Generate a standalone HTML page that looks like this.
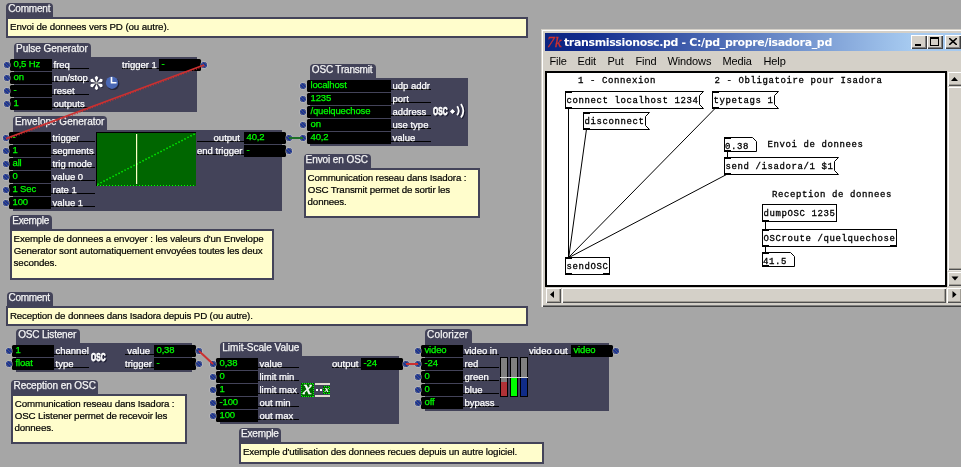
<!DOCTYPE html>
<html lang="fr"><head><meta charset="utf-8"><title>transmissionosc</title>
<style>
html,body{margin:0;padding:0;overflow:hidden}
body{width:961px;height:467px;overflow:hidden;background:#a6a6a6;position:relative;font-family:"Liberation Sans",sans-serif}
#isa div,#isa span,#isa i,#pd div,#pd span,#pd svg{position:absolute;display:block}
#isa,#pd{position:absolute;left:0;top:0;will-change:transform}
.tab{background:#434359;border-radius:4px 4px 0 0}
.pn{background:#434359}
.tt{color:#f4f4f4;-webkit-text-stroke:.25px #f4f4f4;font-size:10px;line-height:12px;white-space:nowrap;letter-spacing:0}
.cb{background:#fffdcc;border:2px solid #434359}
.ct{color:#000;-webkit-text-stroke:.2px #000;font-size:9.75px;line-height:12px;white-space:nowrap}
.fi{background:#000;height:12px;border-radius:1.5px 0 0 1.5px}
.fo{background:#000;height:12px;border-radius:0 1.5px 1.5px 0}
.gv{color:#00ff00;-webkit-text-stroke:.25px #00ff00;font-size:9.5px;line-height:11px;white-space:nowrap;letter-spacing:-.15px}
.lb{color:#fff;-webkit-text-stroke:.25px #fff;font-size:9.5px;line-height:11px;white-space:nowrap}
.pt{width:6px;height:6px;border-radius:50%;background:repeating-linear-gradient(45deg,#1a3296 0 1.5px,#485478 1.5px 2.3px);box-shadow:0 0 0 .8px rgba(200,200,205,.55)}
#pd{left:541px;top:29px;width:430px;height:278px;background:#d4d0c8;box-shadow:inset 1px 1px 0 #d4d0c8,inset 2px 2px 0 #fff,inset -1px -1px 0 #404040,inset -2px -2px 0 #808080}
.wt{color:#fff;font-weight:bold;font-size:11px;line-height:16px;white-space:nowrap;font-family:"DejaVu Sans","Liberation Sans",sans-serif}
.mn{color:#000;font-size:11px;line-height:14px;white-space:nowrap;letter-spacing:-.12px}
.cbt{width:16px;height:14px;background:#d4d0c8;box-shadow:inset 1px 1px 0 #fff,inset -1px -1px 0 #404040,inset -2px -2px 0 #808080}
.sbt{background:#d4d0c8;box-shadow:inset 1px 1px 0 #d4d0c8,inset 2px 2px 0 #fff,inset -1px -1px 0 #505050,inset -2px -2px 0 #a09c94}
svg.ov{position:absolute;left:0;top:0;pointer-events:none;will-change:transform}
</style></head>
<body>
<div id="isa">
<div class="tab" style="left:6px;top:3px;width:47px;height:14px"></div>
<span class="tt" style="left:8.2px;top:3px;letter-spacing:-0.167px;">Comment</span>
<div class="cb" style="left:6px;top:17px;width:518px;height:17px"></div>
<span class="ct" style="left:10.1px;top:21px;letter-spacing:-0.114px;">Envoi de donnees vers PD (ou autre).</span>
<div class="pn" style="left:14px;top:57px;width:183px;height:55px"></div>
<div class="tab" style="left:14px;top:43px;width:77px;height:14px"></div>
<span class="tt" style="left:16.1px;top:43px;letter-spacing:-0.071px;">Pulse Generator</span>
<div class="fi" style="left:10px;top:59px;width:42px"></div>
<span class="gv" style="left:13.5px;top:58px;">0,5 Hz</span>
<div style="left:52px;top:68px;width:37px;height:1px;background:#000;"></div>
<span class="lb" style="left:53.5px;top:59px;">freq</span>
<i class="pt" style="left:4px;top:62px"></i>
<div class="fi" style="left:10px;top:72px;width:42px"></div>
<span class="gv" style="left:13.5px;top:71px;">on</span>
<div style="left:52px;top:81px;width:37px;height:1px;background:#000;"></div>
<span class="lb" style="left:53.5px;top:72px;">run/stop</span>
<i class="pt" style="left:4px;top:75px"></i>
<div class="fi" style="left:10px;top:85px;width:42px"></div>
<span class="gv" style="left:13.5px;top:84px;">-</span>
<div style="left:52px;top:94px;width:37px;height:1px;background:#000;"></div>
<span class="lb" style="left:53.5px;top:85px;">reset</span>
<i class="pt" style="left:4px;top:88px"></i>
<div class="fi" style="left:10px;top:98px;width:42px"></div>
<span class="gv" style="left:13.5px;top:97px;">1</span>
<div style="left:52px;top:107px;width:37px;height:1px;background:#000;"></div>
<span class="lb" style="left:53.5px;top:98px;">outputs</span>
<i class="pt" style="left:4px;top:101px"></i>
<div class="fo" style="left:159px;top:59px;width:42px"></div>
<span class="gv" style="left:161.5px;top:58px;">-</span>
<div style="left:122px;top:68px;width:37px;height:1px;background:#000;"></div>
<span class="lb" style="left:122px;top:59px;width:33px;text-align:right">trigger 1</span>
<i class="pt" style="left:201px;top:62px"></i>
<div class="pn" style="left:13px;top:130px;width:269px;height:81px"></div>
<div class="tab" style="left:13px;top:116px;width:94px;height:14px"></div>
<span class="tt" style="left:14.9px;top:116px;letter-spacing:0.000px;">Envelope Generator</span>
<div class="fi" style="left:9px;top:132px;width:42px"></div>
<span class="gv" style="left:12.5px;top:131px;">-</span>
<div style="left:51px;top:141px;width:44px;height:1px;background:#000;"></div>
<span class="lb" style="left:52.5px;top:132px;">trigger</span>
<i class="pt" style="left:3px;top:135px"></i>
<div class="fi" style="left:9px;top:145px;width:42px"></div>
<span class="gv" style="left:12.5px;top:144px;">1</span>
<div style="left:51px;top:154px;width:44px;height:1px;background:#000;"></div>
<span class="lb" style="left:52.5px;top:145px;">segments</span>
<i class="pt" style="left:3px;top:148px"></i>
<div class="fi" style="left:9px;top:158px;width:42px"></div>
<span class="gv" style="left:12.5px;top:157px;">all</span>
<div style="left:51px;top:167px;width:44px;height:1px;background:#000;"></div>
<span class="lb" style="left:52.5px;top:158px;">trig mode</span>
<i class="pt" style="left:3px;top:161px"></i>
<div class="fi" style="left:9px;top:171px;width:42px"></div>
<span class="gv" style="left:12.5px;top:170px;">0</span>
<div style="left:51px;top:180px;width:44px;height:1px;background:#000;"></div>
<span class="lb" style="left:52.5px;top:171px;">value 0</span>
<i class="pt" style="left:3px;top:174px"></i>
<div class="fi" style="left:9px;top:184px;width:42px"></div>
<span class="gv" style="left:12.5px;top:183px;">1 Sec</span>
<div style="left:51px;top:193px;width:44px;height:1px;background:#000;"></div>
<span class="lb" style="left:52.5px;top:184px;">rate 1</span>
<i class="pt" style="left:3px;top:187px"></i>
<div class="fi" style="left:9px;top:197px;width:42px"></div>
<span class="gv" style="left:12.5px;top:196px;">100</span>
<div style="left:51px;top:206px;width:44px;height:1px;background:#000;"></div>
<span class="lb" style="left:52.5px;top:197px;">value 1</span>
<i class="pt" style="left:3px;top:200px"></i>
<div class="fo" style="left:244px;top:132px;width:42px"></div>
<span class="gv" style="left:246.5px;top:131px;">40,2</span>
<div style="left:197px;top:141px;width:47px;height:1px;background:#000;"></div>
<span class="lb" style="left:197px;top:132px;width:43px;text-align:right">output</span>
<i class="pt" style="left:286px;top:135px"></i>
<div class="fo" style="left:244px;top:145px;width:42px"></div>
<span class="gv" style="left:246.5px;top:144px;">-</span>
<div style="left:197px;top:154px;width:47px;height:1px;background:#000;"></div>
<span class="lb" style="left:197px;top:145px;width:43px;text-align:right">end trigger</span>
<i class="pt" style="left:286px;top:148px"></i>
<div class="pn" style="left:310px;top:78px;width:158px;height:68px"></div>
<div class="tab" style="left:310px;top:64px;width:66px;height:14px"></div>
<span class="tt" style="left:311.8px;top:64px;letter-spacing:-0.182px;">OSC Transmit</span>
<div class="fi" style="left:307px;top:80px;width:84px"></div>
<span class="gv" style="left:310.5px;top:79px;">localhost</span>
<div style="left:391px;top:89px;width:40px;height:1px;background:#000;"></div>
<span class="lb" style="left:392.5px;top:80px;">udp addr</span>
<i class="pt" style="left:300px;top:83px"></i>
<div class="fi" style="left:307px;top:93px;width:84px"></div>
<span class="gv" style="left:310.5px;top:92px;">1235</span>
<div style="left:391px;top:102px;width:40px;height:1px;background:#000;"></div>
<span class="lb" style="left:392.5px;top:93px;">port</span>
<i class="pt" style="left:300px;top:96px"></i>
<div class="fi" style="left:307px;top:106px;width:84px"></div>
<span class="gv" style="left:310.5px;top:105px;">/quelquechose</span>
<div style="left:391px;top:115px;width:40px;height:1px;background:#000;"></div>
<span class="lb" style="left:392.5px;top:106px;">address</span>
<i class="pt" style="left:300px;top:109px"></i>
<div class="fi" style="left:307px;top:119px;width:84px"></div>
<span class="gv" style="left:310.5px;top:118px;">on</span>
<div style="left:391px;top:128px;width:40px;height:1px;background:#000;"></div>
<span class="lb" style="left:392.5px;top:119px;">use type</span>
<i class="pt" style="left:300px;top:122px"></i>
<div class="fi" style="left:307px;top:132px;width:84px"></div>
<span class="gv" style="left:310.5px;top:131px;">40,2</span>
<div style="left:391px;top:141px;width:40px;height:1px;background:#000;"></div>
<span class="lb" style="left:392.5px;top:132px;">value</span>
<i class="pt" style="left:300px;top:135px"></i>
<div class="tab" style="left:10px;top:215px;width:42px;height:14px"></div>
<span class="tt" style="left:12.3px;top:215px;letter-spacing:-0.333px;">Exemple</span>
<div class="cb" style="left:10px;top:229px;width:260px;height:47px"></div>
<span class="ct" style="left:13.6px;top:233px;letter-spacing:-0.109px;">Exemple de donnees a envoyer : les valeurs d'un Envelope</span>
<span class="ct" style="left:13.8px;top:245px;letter-spacing:-0.130px;">Generator sont automatiquement envoyées toutes les deux</span>
<span class="ct" style="left:13.6px;top:257px;letter-spacing:-0.125px;">secondes.</span>
<div class="tab" style="left:304px;top:154px;width:67px;height:14px"></div>
<span class="tt" style="left:305.6px;top:154px;letter-spacing:-0.091px;">Envoi en OSC</span>
<div class="cb" style="left:304px;top:168px;width:172px;height:46px"></div>
<span class="ct" style="left:307.6px;top:172px;letter-spacing:-0.176px;">Communication reseau dans Isadora :</span>
<span class="ct" style="left:307.8px;top:184px;letter-spacing:-0.156px;">OSC Transmit permet de sortir les</span>
<span class="ct" style="left:307.6px;top:196px;letter-spacing:-0.143px;">donnees.</span>
<div class="tab" style="left:7px;top:292px;width:46px;height:14px"></div>
<span class="tt" style="left:8.6px;top:292px;letter-spacing:-0.333px;">Comment</span>
<div class="cb" style="left:6px;top:306px;width:518px;height:16px"></div>
<span class="ct" style="left:9.9px;top:310px;letter-spacing:-0.167px;">Reception de donnees dans Isadora depuis PD (ou autre).</span>
<div class="pn" style="left:16px;top:343px;width:176px;height:29px"></div>
<div class="tab" style="left:16px;top:329px;width:64px;height:14px"></div>
<span class="tt" style="left:18.2px;top:329px;letter-spacing:-0.182px;">OSC Listener</span>
<div class="fi" style="left:12px;top:345px;width:42px"></div>
<span class="gv" style="left:15.5px;top:344px;">1</span>
<div style="left:54px;top:354px;width:35px;height:1px;background:#000;"></div>
<span class="lb" style="left:55.5px;top:345px;">channel</span>
<i class="pt" style="left:6px;top:348px"></i>
<div class="fi" style="left:12px;top:358px;width:42px"></div>
<span class="gv" style="left:15.5px;top:357px;">float</span>
<div style="left:54px;top:367px;width:35px;height:1px;background:#000;"></div>
<span class="lb" style="left:55.5px;top:358px;">type</span>
<i class="pt" style="left:6px;top:361px"></i>
<div class="fo" style="left:154px;top:345px;width:42px"></div>
<span class="gv" style="left:156.5px;top:344px;">0,38</span>
<div style="left:125px;top:354px;width:29px;height:1px;background:#000;"></div>
<span class="lb" style="left:125px;top:345px;width:25px;text-align:right">value</span>
<i class="pt" style="left:196px;top:348px"></i>
<div class="fo" style="left:154px;top:358px;width:42px"></div>
<span class="gv" style="left:156.5px;top:357px;">-</span>
<div style="left:125px;top:367px;width:29px;height:1px;background:#000;"></div>
<span class="lb" style="left:125px;top:358px;width:25px;text-align:right">trigger</span>
<i class="pt" style="left:196px;top:361px"></i>
<div class="tab" style="left:11px;top:380px;width:87px;height:14px"></div>
<span class="tt" style="left:13.5px;top:380px;letter-spacing:-0.067px;">Reception en OSC</span>
<div class="cb" style="left:11px;top:394px;width:172px;height:46px"></div>
<span class="ct" style="left:14.8px;top:398px;letter-spacing:-0.147px;">Communication reseau dans Isadora :</span>
<span class="ct" style="left:14.8px;top:410px;letter-spacing:-0.147px;">OSC Listener permet de recevoir les</span>
<span class="ct" style="left:14.5px;top:422px;letter-spacing:-0.143px;">donnees.</span>
<div class="pn" style="left:220px;top:356px;width:179px;height:68px"></div>
<div class="tab" style="left:220px;top:342px;width:82px;height:14px"></div>
<span class="tt" style="left:222.3px;top:342px;letter-spacing:0.000px;">Limit-Scale Value</span>
<div class="fi" style="left:216px;top:358px;width:42px"></div>
<span class="gv" style="left:219.5px;top:357px;">0,38</span>
<div style="left:258px;top:367px;width:41px;height:1px;background:#000;"></div>
<span class="lb" style="left:259.5px;top:358px;">value</span>
<i class="pt" style="left:210px;top:361px"></i>
<div class="fi" style="left:216px;top:371px;width:42px"></div>
<span class="gv" style="left:219.5px;top:370px;">0</span>
<div style="left:258px;top:380px;width:41px;height:1px;background:#000;"></div>
<span class="lb" style="left:259.5px;top:371px;">limit min</span>
<i class="pt" style="left:210px;top:374px"></i>
<div class="fi" style="left:216px;top:384px;width:42px"></div>
<span class="gv" style="left:219.5px;top:383px;">1</span>
<div style="left:258px;top:393px;width:41px;height:1px;background:#000;"></div>
<span class="lb" style="left:259.5px;top:384px;">limit max</span>
<i class="pt" style="left:210px;top:387px"></i>
<div class="fi" style="left:216px;top:397px;width:42px"></div>
<span class="gv" style="left:219.5px;top:396px;">-100</span>
<div style="left:258px;top:406px;width:41px;height:1px;background:#000;"></div>
<span class="lb" style="left:259.5px;top:397px;">out min</span>
<i class="pt" style="left:210px;top:400px"></i>
<div class="fi" style="left:216px;top:410px;width:42px"></div>
<span class="gv" style="left:219.5px;top:409px;">100</span>
<div style="left:258px;top:419px;width:41px;height:1px;background:#000;"></div>
<span class="lb" style="left:259.5px;top:410px;">out max</span>
<i class="pt" style="left:210px;top:413px"></i>
<div class="fo" style="left:361px;top:358px;width:42px"></div>
<span class="gv" style="left:363.5px;top:357px;">-24</span>
<div style="left:332px;top:367px;width:29px;height:1px;background:#000;"></div>
<span class="lb" style="left:332px;top:358px;width:25px;text-align:right">output</span>
<i class="pt" style="left:403px;top:361px"></i>
<div class="pn" style="left:425px;top:343px;width:184px;height:68px"></div>
<div class="tab" style="left:425px;top:329px;width:47px;height:14px"></div>
<span class="tt" style="left:427.1px;top:329px;letter-spacing:0.125px;">Colorizer</span>
<div class="fi" style="left:421px;top:345px;width:42px"></div>
<span class="gv" style="left:424.5px;top:344px;">video</span>
<div style="left:463px;top:354px;width:36px;height:1px;background:#000;"></div>
<span class="lb" style="left:464.5px;top:345px;">video in</span>
<i class="pt" style="left:415px;top:348px"></i>
<div class="fi" style="left:421px;top:358px;width:42px"></div>
<span class="gv" style="left:424.5px;top:357px;">-24</span>
<div style="left:463px;top:367px;width:36px;height:1px;background:#000;"></div>
<span class="lb" style="left:464.5px;top:358px;">red</span>
<i class="pt" style="left:415px;top:361px"></i>
<div class="fi" style="left:421px;top:371px;width:42px"></div>
<span class="gv" style="left:424.5px;top:370px;">0</span>
<div style="left:463px;top:380px;width:36px;height:1px;background:#000;"></div>
<span class="lb" style="left:464.5px;top:371px;">green</span>
<i class="pt" style="left:415px;top:374px"></i>
<div class="fi" style="left:421px;top:384px;width:42px"></div>
<span class="gv" style="left:424.5px;top:383px;">0</span>
<div style="left:463px;top:393px;width:36px;height:1px;background:#000;"></div>
<span class="lb" style="left:464.5px;top:384px;">blue</span>
<i class="pt" style="left:415px;top:387px"></i>
<div class="fi" style="left:421px;top:397px;width:42px"></div>
<span class="gv" style="left:424.5px;top:396px;">off</span>
<div style="left:463px;top:406px;width:36px;height:1px;background:#000;"></div>
<span class="lb" style="left:464.5px;top:397px;">bypass</span>
<i class="pt" style="left:415px;top:400px"></i>
<div class="fo" style="left:571px;top:345px;width:42px"></div>
<span class="gv" style="left:573.5px;top:344px;">video</span>
<div style="left:529px;top:354px;width:42px;height:1px;background:#000;"></div>
<span class="lb" style="left:529px;top:345px;width:38px;text-align:right">video out</span>
<i class="pt" style="left:613px;top:348px"></i>
<div class="tab" style="left:239px;top:428px;width:42px;height:14px"></div>
<span class="tt" style="left:241.0px;top:428px;letter-spacing:-0.167px;">Exemple</span>
<div class="cb" style="left:239px;top:442px;width:301px;height:18px"></div>
<span class="ct" style="left:242.9px;top:446px;letter-spacing:-0.154px;">Exemple d'utilisation des donnees recues depuis un autre logiciel.</span>
</div>
<svg class="ov" width="961" height="467" viewBox="0 0 961 467">
<rect x="96" y="132" width="100" height="54" fill="#000"/>
<rect x="97" y="133" width="99" height="53" fill="#006600"/>
<line x1="97" y1="185.5" x2="196" y2="185.5" stroke="#00ff00" stroke-dasharray="1 2" shape-rendering="crispEdges"/>
<line x1="97.5" y1="184.5" x2="195.5" y2="133.5" stroke="#00ff00" stroke-width="1.5" stroke-dasharray="1.3 2.08"/>
<rect x="136" y="134" width="1.2" height="50" fill="#ffffc8"/>
<line x1="204" y1="65" x2="6" y2="138.5" stroke="#cc3030" stroke-width="1.5"/>
<line x1="204.4" y1="66" x2="6.4" y2="139.5" stroke="#cc3030" stroke-width="1.2" stroke-dasharray="1 1.7"/>
<line x1="289" y1="138" x2="303" y2="138" stroke="#1c7028" stroke-width="2"/>
<line x1="199" y1="351" x2="213" y2="364" stroke="#cc3030" stroke-width="2"/>
<line x1="406" y1="364" x2="418" y2="364" stroke="#cc3030" stroke-width="2"/>
<g transform="translate(97.3,83.8)" opacity=".55">
<path transform="rotate(0)" d="M0,-1.2 L-1.8,-5.3 Q0,-8.6 1.8,-5.3 Z" fill="#1c1c2c"/>
<path transform="rotate(60)" d="M0,-1.2 L-1.8,-5.3 Q0,-8.6 1.8,-5.3 Z" fill="#1c1c2c"/>
<path transform="rotate(120)" d="M0,-1.2 L-1.8,-5.3 Q0,-8.6 1.8,-5.3 Z" fill="#1c1c2c"/>
<path transform="rotate(180)" d="M0,-1.2 L-1.8,-5.3 Q0,-8.6 1.8,-5.3 Z" fill="#1c1c2c"/>
<path transform="rotate(240)" d="M0,-1.2 L-1.8,-5.3 Q0,-8.6 1.8,-5.3 Z" fill="#1c1c2c"/>
<path transform="rotate(300)" d="M0,-1.2 L-1.8,-5.3 Q0,-8.6 1.8,-5.3 Z" fill="#1c1c2c"/>
</g>
<g transform="translate(96.5,83)">
<path transform="rotate(0)" d="M0,-1.2 L-1.8,-5.3 Q0,-8.6 1.8,-5.3 Z" fill="#fff"/>
<path transform="rotate(60)" d="M0,-1.2 L-1.8,-5.3 Q0,-8.6 1.8,-5.3 Z" fill="#fff"/>
<path transform="rotate(120)" d="M0,-1.2 L-1.8,-5.3 Q0,-8.6 1.8,-5.3 Z" fill="#fff"/>
<path transform="rotate(180)" d="M0,-1.2 L-1.8,-5.3 Q0,-8.6 1.8,-5.3 Z" fill="#fff"/>
<path transform="rotate(240)" d="M0,-1.2 L-1.8,-5.3 Q0,-8.6 1.8,-5.3 Z" fill="#fff"/>
<path transform="rotate(300)" d="M0,-1.2 L-1.8,-5.3 Q0,-8.6 1.8,-5.3 Z" fill="#fff"/>
<circle r="1.4" fill="#a8a8a8"/></g>
<circle cx="113" cy="83.7" r="6.4" fill="#25253a"/>
<circle cx="112" cy="82.7" r="6.2" fill="#4a68b4"/>
<path d="M111.5,77 V82.7 H116.5" fill="none" stroke="#fff" stroke-width="1.6"/>
<g font-family="Liberation Sans, sans-serif" font-weight="bold" font-size="10.5px" stroke-width=".75">
<text x="434.4" y="116.2" fill="#1c1c30" stroke="#1c1c30" textLength="14.5" lengthAdjust="spacingAndGlyphs">OSC</text>
<text x="433" y="114.8" fill="#fff" stroke="#fff" textLength="14.5" lengthAdjust="spacingAndGlyphs">OSC</text>
<text x="92.4" y="362.4" fill="#1c1c30" stroke="#1c1c30" textLength="14.5" lengthAdjust="spacingAndGlyphs">OSC</text>
<text x="91" y="361" fill="#fff" stroke="#fff" textLength="14.5" lengthAdjust="spacingAndGlyphs">OSC</text>
</g>
<path d="M453.6,109.4 l2.6,2.6 l-2.6,2.6 l-2.6,-2.6z" fill="#1c1c30"/>
<path d="M452.5,108.9 l2.6,2.6 l-2.6,2.6 l-2.6,-2.6z" fill="#fff"/>
<path d="M458.4,107 q3,4.5 0,9 M462.2,104.8 q4.6,7 0,13.6" fill="none" stroke="#1c1c30" stroke-width="1.7"/>
<path d="M457.2,106.2 q3,4.5 0,9 M461,104 q4.6,7 0,13.6" fill="none" stroke="#fff" stroke-width="1.8"/>
<g shape-rendering="crispEdges">
<rect x="301.5" y="383.5" width="12" height="13" fill="#006600" stroke="#005000"/>
<rect x="301.5" y="383.5" width="12" height="13" fill="none" stroke="#00ff00" stroke-dasharray="1 1"/>
<rect x="315" y="383" width="15" height="2" fill="#dedad0"/>
<rect x="315" y="395" width="15" height="2" fill="#dedad0"/>
<rect x="316" y="389" width="2" height="2" fill="#fff"/><rect x="320" y="389" width="2" height="2" fill="#fff"/>
<rect x="323.5" y="386.5" width="6" height="7" fill="#006600" stroke="#005000"/>
<rect x="323.5" y="386.5" width="6" height="7" fill="none" stroke="#00ff00" stroke-dasharray="1 1"/>
</g>
<text x="303" y="394" font-family="Liberation Serif, serif" font-style="italic" font-size="19px" fill="#fff" stroke="#fff" stroke-width=".4" textLength="8.8" lengthAdjust="spacingAndGlyphs">x</text>
<text x="324.6" y="392.4" font-family="Liberation Serif, serif" font-style="italic" font-weight="bold" font-size="9px" fill="#fff">x</text>
<rect x="500.5" y="357.5" width="7" height="39" fill="#808080" stroke="#000"/>
<rect x="501" y="382" width="6" height="14" fill="#b03236"/>
<rect x="510.5" y="357.5" width="7" height="39" fill="#808080" stroke="#000"/>
<rect x="511" y="378" width="6" height="18" fill="#00ff00"/>
<rect x="520.5" y="357.5" width="7" height="39" fill="#808080" stroke="#000"/>
<rect x="521" y="378" width="6" height="18" fill="#102c88"/>
<rect x="500" y="377" width="28" height="1" fill="#d8d8d8"/>
</svg>
<div id="pd">
<div style="left:4px;top:4px;width:420px;height:18px;background:linear-gradient(90deg,#0c2480 0px,#102a8c 40px,#a6caf0 365px);"></div>
<span class="wt" style="left:22.9px;top:6px;letter-spacing:-0.349px;">transmissionosc.pd - C:/pd_propre/isadora_pd</span>
<svg style="left:6px;top:5px" width="16" height="16" viewBox="0 0 16 16"><text x="0" y="13" font-family="Liberation Serif, serif" font-style="italic" font-size="15px" fill="#cc3030" stroke="#cc3030" stroke-width=".3" textLength="14.5" lengthAdjust="spacingAndGlyphs">7k</text></svg>
<div class="cbt" style="left:370px;top:6px"></div>
<div style="left:374px;top:15px;width:6px;height:2px;background:#000;"></div>
<div class="cbt" style="left:386px;top:6px"></div>
<div style="left:389px;top:8px;width:9px;height:9px;background:transparent;border:1px solid #000;border-top:2px solid #000;box-sizing:border-box"></div>
<div class="cbt" style="left:404px;top:6px"></div>
<svg style="left:408px;top:9px" width="8" height="7"><path d="M0,0 L8,7 M8,0 L0,7" stroke="#000" stroke-width="1.6" fill="none"/></svg>
<span class="mn" style="left:8.5px;top:25px;">File</span>
<span class="mn" style="left:36.5px;top:25px;">Edit</span>
<span class="mn" style="left:66.5px;top:25px;">Put</span>
<span class="mn" style="left:94.5px;top:25px;">Find</span>
<span class="mn" style="left:126.5px;top:25px;">Windows</span>
<span class="mn" style="left:181.5px;top:25px;">Media</span>
<span class="mn" style="left:222.5px;top:25px;">Help</span>
<div style="left:4px;top:42px;width:402px;height:216px;background:#fff;border:2px solid #000;box-sizing:border-box"></div>
<div style="left:406px;top:42px;width:20px;height:216px;background:#d4d0c8;"></div>
<div style="left:4px;top:258px;width:420px;height:16px;background:#d4d0c8;"></div>
<div class="sbt" style="left:406px;top:42px;width:16px;height:15px"></div>
<svg style="left:406px;top:42px" width="16" height="15"><path d="M4,10 L11,10 L7.5,6 Z" fill="#000"/></svg>
<div class="sbt" style="left:406px;top:57px;width:16px;height:184px"></div>
<div style="left:406px;top:241px;width:16px;height:1px;background:#e9e7e2;"></div>
<div class="sbt" style="left:406px;top:242px;width:16px;height:15px"></div>
<svg style="left:406px;top:242px" width="16" height="15"><path d="M4.5,5.5 L11.5,5.5 L8,9.5 Z" fill="#000"/></svg>
<div class="sbt" style="left:4px;top:258px;width:16px;height:16px"></div>
<svg style="left:4px;top:258px" width="16" height="16"><path d="M9,4 L9,11 L5,7.5 Z" fill="#000"/></svg>
<div class="sbt" style="left:20px;top:258px;width:385px;height:16px"></div>
<div class="sbt" style="left:405px;top:258px;width:16px;height:16px"></div>
<svg style="left:405px;top:258px" width="16" height="16"><path d="M6.5,4 L6.5,11 L10.5,7.5 Z" fill="#000"/></svg>
</div>
<svg class="ov" width="961" height="467" viewBox="0 0 961 467">
<g font-family="Liberation Mono, monospace" font-size="9px" letter-spacing=".6" fill="#000" stroke="#000" stroke-width=".3">
<g stroke="#000" stroke-width="1" fill="none">
<line x1="568.5" y1="108" x2="568.5" y2="257"/>
<line x1="586.5" y1="129" x2="568.8" y2="257"/>
<line x1="715.5" y1="108" x2="569" y2="257"/>
<line x1="727.5" y1="174" x2="569" y2="257.5"/>
<line x1="727.5" y1="151" x2="727.5" y2="158"/>
<line x1="765.5" y1="221" x2="765.5" y2="229"/>
<line x1="765.5" y1="246" x2="765.5" y2="252"/>
</g>
<text x="578" y="83">1 - Connexion</text>
<text x="714.5" y="83">2 - Obligatoire pour Isadora</text>
<text x="767.5" y="147">Envoi de donnees</text>
<text x="772" y="197">Reception de donnees</text>
<path d="M565.5,91.5 H703.5 L699.5,95.5 V104.5 L703.5,108.5 H565.5 Z" fill="#fff" stroke="#000" stroke-width="1"/>
<rect x="565" y="91" width="7" height="2" fill="#000" stroke="none"/><rect x="565" y="107" width="7" height="2" fill="#000" stroke="none"/>
<text x="566.5" y="103">connect localhost 1234</text>
<path d="M712.5,91.5 H778.5 L774.5,95.5 V104.5 L778.5,108.5 H712.5 Z" fill="#fff" stroke="#000" stroke-width="1"/>
<rect x="712" y="91" width="7" height="2" fill="#000" stroke="none"/><rect x="712" y="107" width="7" height="2" fill="#000" stroke="none"/>
<text x="713.5" y="103">typetags 1</text>
<path d="M583.5,112.5 H649.5 L645.5,116.5 V125.5 L649.5,129.5 H583.5 Z" fill="#fff" stroke="#000" stroke-width="1"/>
<rect x="583" y="112" width="7" height="2" fill="#000" stroke="none"/><rect x="583" y="128" width="7" height="2" fill="#000" stroke="none"/>
<text x="584.5" y="124">disconnect</text>
<path d="M724.5,137.5 H752.5 L756.5,141.5 V151.5 H724.5 Z" fill="#fff" stroke="#000" stroke-width="1"/>
<rect x="724" y="137" width="7" height="2" fill="#000" stroke="none"/><rect x="724" y="150" width="7" height="2" fill="#000" stroke="none"/>
<text x="725" y="149">0.38</text>
<path d="M724.5,157.5 H838.5 L834.5,161.5 V170.5 L838.5,174.5 H724.5 Z" fill="#fff" stroke="#000" stroke-width="1"/>
<rect x="724" y="157" width="7" height="2" fill="#000" stroke="none"/><rect x="724" y="173" width="7" height="2" fill="#000" stroke="none"/>
<text x="725.5" y="169">send /isadora/1 $1</text>
<rect x="762.5" y="204.5" width="74" height="17" fill="#fff" stroke="#000" stroke-width="1"/>
<rect x="762" y="220" width="7" height="2" fill="#000" stroke="none"/>
<text x="763.5" y="216">dumpOSC 1235</text>
<rect x="762.5" y="229.5" width="134" height="17" fill="#fff" stroke="#000" stroke-width="1"/>
<rect x="762" y="229" width="7" height="2" fill="#000" stroke="none"/>
<rect x="762" y="245" width="7" height="2" fill="#000" stroke="none"/>
<rect x="890" y="245" width="7" height="2" fill="#000" stroke="none"/>
<text x="763.5" y="241">OSCroute /quelquechose</text>
<path d="M762.5,252.5 H790.5 L794.5,256.5 V266.5 H762.5 Z" fill="#fff" stroke="#000" stroke-width="1"/>
<rect x="762" y="252" width="7" height="2" fill="#000" stroke="none"/><rect x="762" y="265" width="7" height="2" fill="#000" stroke="none"/>
<text x="763" y="264">41.5</text>
<rect x="565.5" y="257.5" width="44" height="17" fill="#fff" stroke="#000" stroke-width="1"/>
<rect x="565" y="257" width="7" height="2" fill="#000" stroke="none"/>
<rect x="565" y="273" width="7" height="2" fill="#000" stroke="none"/>
<rect x="603" y="273" width="7" height="2" fill="#000" stroke="none"/>
<text x="566.5" y="269">sendOSC</text>
</g>
</svg>
</body></html>
